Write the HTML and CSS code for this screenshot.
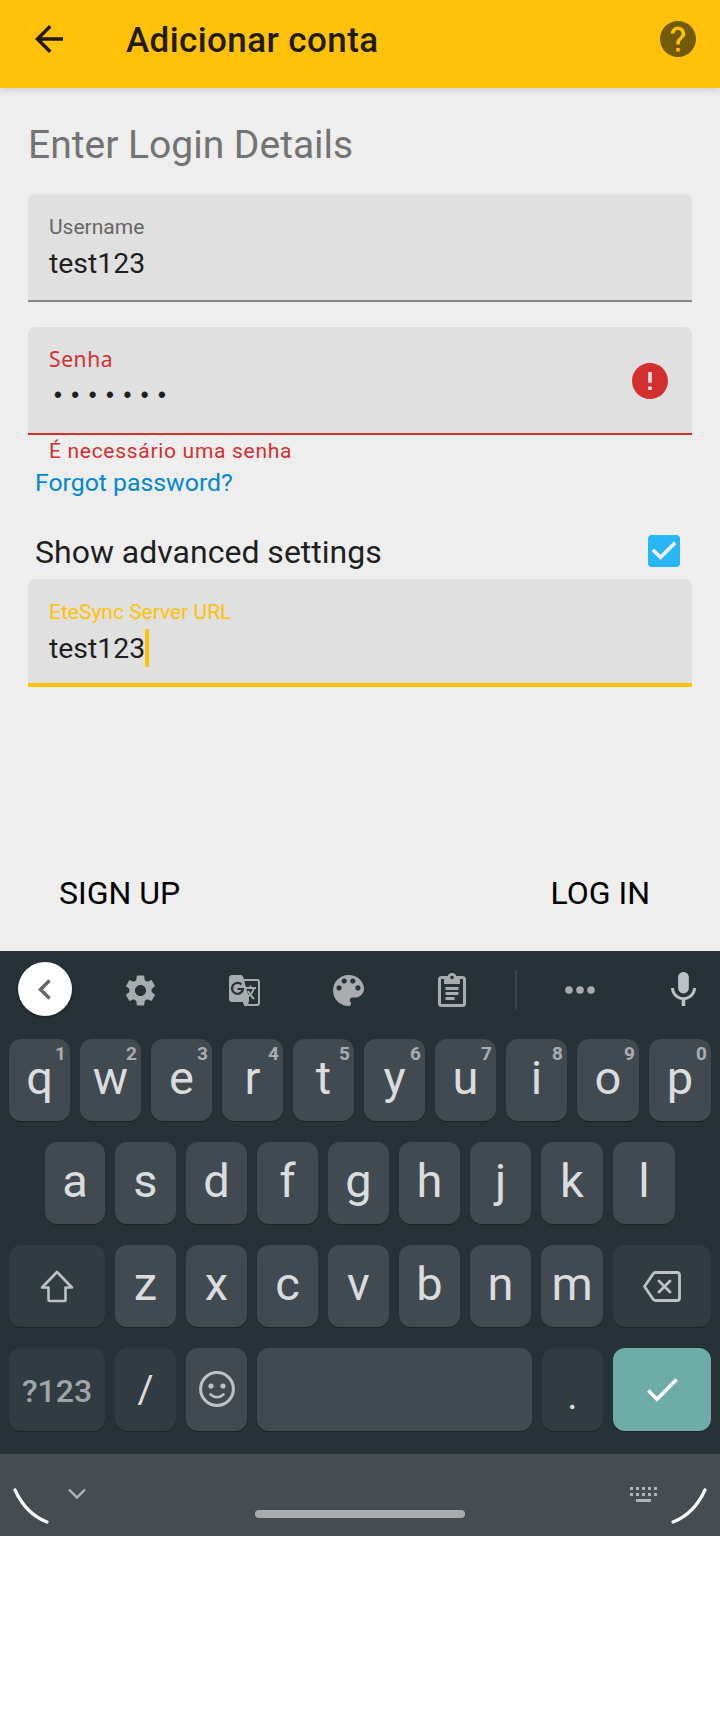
FILE: index.html
```html
<!DOCTYPE html>
<html lang="pt">
<head>
<meta charset="utf-8">
<title>Adicionar conta</title>
<link rel="stylesheet" href="styles.css">
</head>
<body>
<header class="appbar">
  <svg class="back" width="28" height="28" viewBox="4 4 16 16"><path fill="currentColor" d="M20 11H7.830l5.590-5.590L12 4l-8 8 8 8 1.410-1.410L7.830 13H20v-2z"/></svg>
  <h1 class="appbar-title">Adicionar conta</h1>
  <svg class="help" width="36" height="36" viewBox="2 2 20 20"><path fill="currentColor" d="M12 2C6.480 2 2 6.480 2 12s4.480 10 10 10 10-4.480 10-10S17.520 2 12 2zm1 17h-2v-2h2v2zm2.070-7.750l-.9.920C13.450 12.900 13 13.500 13 15h-2v-.5c0-1.100.45-2.100 1.170-2.830l1.240-1.260c.37-.36.59-.86.59-1.410 0-1.100-.9-2-2-2s-2 .9-2 2H8c0-2.210 1.790-4 4-4s4 1.790 4 4c0 .88-.36 1.680-.93 2.250z"/></svg>
</header>
<main class="form">
  <h2 class="heading">Enter Login Details</h2>
  <div class="field">
    <div class="label">Username</div>
    <div class="value">test123</div>
  </div>
  <div class="field field-error">
    <div class="field-text">
      <div class="label label-noto">Senha</div>
      <div class="value dots">•••••••</div>
    </div>
    <svg class="error-icon" width="36" height="36" viewBox="2 2 20 20"><path fill="currentColor" d="M12 2C6.480 2 2 6.480 2 12s4.480 10 10 10 10-4.480 10-10S17.520 2 12 2zm1 15h-2v-2h2v2zm0-4h-2V7h2v6z"/></svg>
  </div>
  <div class="error">É necessário uma senha</div>
  <a class="forgot">Forgot password?</a>
  <div class="advanced">
    <span class="advanced-text">Show advanced settings</span>
    <svg class="checkbox" width="32" height="32" viewBox="3 3 18 18"><path fill="currentColor" d="M19 3H5c-1.110 0-2 .9-2 2v14c0 1.100.89 2 2 2h14c1.110 0 2-.9 2-2V5c0-1.100-.89-2-2-2zm-9 14l-5-5 1.410-1.410L10 14.170l7.590-7.590L19 8l-9 9z"/></svg>
  </div>
  <div class="field field-focus">
    <div class="label">EteSync Server URL</div>
    <div class="value">test123<span class="caret"></span></div>
  </div>
  <div class="actions">
    <span class="action">SIGN UP</span>
    <span class="action">LOG IN</span>
  </div>
</main>
<section class="keyboard">
  <div class="tools">
    <span class="collapse"><svg width="13" height="21" viewBox="0 0 13 21"><path fill="none" stroke="#666" stroke-width="3.400" d="M11.500 1.500L2.500 10.500l9 9"/></svg></span>
    <svg class="tool gear" width="31" height="31" viewBox="2 2 20 20"><path fill="currentColor" d="M19.140 12.940c.04-.3.060-.61.060-.94 0-.32-.02-.64-.07-.94l2.030-1.580c.18-.14.23-.41.120-.61l-1.920-3.320c-.12-.22-.37-.29-.59-.22l-2.390.96c-.5-.38-1.030-.7-1.620-.94l-.36-2.540c-.04-.24-.24-.41-.48-.41h-3.840c-.24 0-.43.17-.47.41l-.36 2.540c-.59.24-1.130.57-1.620.94l-2.390-.96c-.22-.08-.47 0-.59.22L2.740 8.870c-.12.21-.08.47.12.61l2.030 1.580c-.05.3-.09.63-.09.940s.02.64.07.94l-2.030 1.580c-.18.14-.23.41-.12.610l1.920 3.320c.12.22.37.29.59.22l2.390-.96c.5.38 1.030.7 1.620.94l.36 2.540c.05.24.24.41.48.41h3.840c.24 0 .44-.17.47-.41l.36-2.540c.59-.24 1.130-.56 1.620-.94l2.390.96c.22.08.47 0 .59-.22l1.920-3.320c.12-.22.07-.47-.12-.61l-2.010-1.580zM12 15.600c-1.980 0-3.600-1.620-3.600-3.600s1.620-3.600 3.600-3.600 3.600 1.620 3.600 3.600-1.620 3.600-3.600 3.600z"/></svg>
    <svg class="tool translate" width="31" height="31" viewBox="0 0 31 31">
      <path fill="none" stroke="currentColor" stroke-width="2" d="M13 5h15q2 0 2 2v21q0 2-2 2H16l-3-8"/>
      <path fill="currentColor" d="M3 0h9q1.500 0 2 1.500L20 19v8l-2 4-3.500-4H3q-3 0-3-3V3q0-3 3-3z"/>
      <path fill="#263238" d="M15.300 6.500H28v21h-8.500l1-3z"/>
      <path fill="none" stroke="#263238" stroke-width="2.200" d="M12.500 9.500A5.500 5.500 0 1 0 14 14H8.500"/>
      <path fill="none" stroke="currentColor" stroke-width="1.800" d="M16 13h11M21.500 10.500V13M25 13q-1.500 6-7 9M19 16q2 4 6 8"/>
    </svg>
    <svg class="tool palette" width="31" height="31" viewBox="3 3 18 18"><path fill="currentColor" d="M12 3c-4.970 0-9 4.030-9 9s4.030 9 9 9c.83 0 1.500-.67 1.500-1.500 0-.39-.15-.74-.39-1.010-.23-.26-.38-.61-.38-.99 0-.83.67-1.500 1.500-1.500H16c2.760 0 5-2.240 5-5 0-4.420-4.030-8-9-8zm-5.500 9c-.83 0-1.500-.67-1.500-1.500S5.670 9 6.500 9 8 9.670 8 10.500 7.330 12 6.500 12zm3-4C8.670 8 8 7.330 8 6.500S8.670 5 9.500 5s1.500.67 1.500 1.500S10.330 8 9.500 8zm5 0c-.83 0-1.500-.67-1.500-1.500S13.670 5 14.500 5s1.500.67 1.500 1.500S15.330 8 14.500 8zm3 4c-.83 0-1.500-.67-1.500-1.500S16.670 9 17.500 9s1.500.67 1.500 1.500-.67 1.500-1.500 1.500z"/></svg>
    <svg class="tool clip" width="28" height="34" viewBox="0 0 28 34">
      <rect x="1.500" y="4.500" width="25" height="28" rx="2" fill="none" stroke="currentColor" stroke-width="3"/>
      <path fill="currentColor" d="M6 4h16v7H6z"/><circle cx="14" cy="4.500" r="4.500" fill="currentColor"/><circle cx="14" cy="4.500" r="1.800" fill="#263238"/>
      <path stroke="currentColor" stroke-width="3" d="M7.500 15.500h13M7.500 20.500h13M7.500 25.500h9"/>
    </svg>
    <span class="divider"></span>
    <svg class="tool more" width="30" height="8" viewBox="0 0 30 8"><circle cx="4" cy="4" r="3.800" fill="currentColor"/><circle cx="15" cy="4" r="3.800" fill="currentColor"/><circle cx="26" cy="4" r="3.800" fill="currentColor"/></svg>
    <svg class="tool mic" width="25" height="34" viewBox="5 2 14 19"><path fill="currentColor" d="M12 14c1.660 0 2.990-1.340 2.990-3L15 5c0-1.660-1.340-3-3-3S9 3.340 9 5v6c0 1.660 1.340 3 3 3zm5.300-3c0 3-2.540 5.100-5.300 5.100S6.700 14 6.700 11H5c0 3.410 2.720 6.230 6 6.720V21h2v-3.280c3.280-.48 6-3.300 6-6.720h-1.700z"/></svg>
  </div>
  <div class="row">
    <div class="key">q<sup class="num">1</sup></div><div class="key">w<sup class="num">2</sup></div><div class="key">e<sup class="num">3</sup></div><div class="key">r<sup class="num">4</sup></div><div class="key">t<sup class="num">5</sup></div><div class="key">y<sup class="num">6</sup></div><div class="key">u<sup class="num">7</sup></div><div class="key">i<sup class="num">8</sup></div><div class="key wide">o<sup class="num">9</sup></div><div class="key wide">p<sup class="num">0</sup></div>
  </div>
  <div class="row row-home">
    <div class="key narrow">a</div><div class="key">s</div><div class="key">d</div><div class="key">f</div><div class="key">g</div><div class="key">h</div><div class="key">j</div><div class="key wide">k</div><div class="key wide">l</div>
  </div>
  <div class="row">
    <div class="key dark side"><svg class="shift" width="34" height="33" viewBox="0 0 34 33"><path fill="none" stroke="currentColor" stroke-width="2.600" stroke-linejoin="round" d="M17 2L2 17.500h6.500V30q0 1 1 1h15q1 0 1-1V17.500H32z"/></svg></div><div class="key">z</div><div class="key">x</div><div class="key">c</div><div class="key">v</div><div class="key">b</div><div class="key">n</div><div class="key wide">m</div><div class="key dark end"><svg class="del" width="38" height="31" viewBox="0 0 38 31"><path fill="none" stroke="currentColor" stroke-width="2.800" stroke-linejoin="round" stroke-linecap="round" d="M12.500 1.500H34q2.500 0 2.500 2.500v23q0 2.500-2.500 2.500H12.500q-1.500 0-2.500-1.500L1.500 15.500 10 3q1-1.500 2.500-1.500zM16 10l11 11M27 10l-11 11"/></svg></div>
  </div>
  <div class="row row-last">
    <div class="key dark side sym">?123</div><div class="key dark punct">/</div><div class="key"><svg class="smile" width="36" height="36" viewBox="0 0 36 36"><circle cx="18" cy="18" r="16.400" fill="none" stroke="currentColor" stroke-width="3"/><circle cx="12" cy="15" r="2.600" fill="currentColor"/><circle cx="24" cy="15" r="2.600" fill="currentColor"/><path fill="none" stroke="currentColor" stroke-width="2.600" stroke-linecap="round" d="M11.500 23.500q6.500 5.500 13 0"/></svg></div><div class="key space"></div><div class="key dark punct dot">.</div><div class="key go end"><svg class="ok" width="31" height="24" viewBox="0 0 31 24"><path fill="none" stroke="#fff" stroke-width="3.600" d="M1.300 12.500l8.700 8.700L29.500 1.500"/></svg></div>
  </div>
</section>
<footer class="navbar">
  <svg class="arc" width="36" height="36" viewBox="0 0 36 36"><path fill="none" stroke="#fff" stroke-width="3.200" stroke-linecap="round" d="M2 2Q13 26 34 34"/></svg>
  <svg class="chevron" width="18" height="12" viewBox="0 0 18 12"><path fill="none" stroke="#b0b4b6" stroke-width="2.400" d="M1 1.500l8 8 8-8"/></svg>
  <span class="pill"></span>
  <svg class="kbd" width="27" height="15" viewBox="0 0 27 15"><path stroke="#b0b4b6" stroke-width="3" stroke-dasharray="3 3" d="M0 1.500h27M0 7.500h27"/><path stroke="#b0b4b6" stroke-width="3" d="M6 13.500h15"/></svg>
  <svg class="arc arc-right" width="36" height="36" viewBox="0 0 36 36"><path fill="none" stroke="#fff" stroke-width="3.200" stroke-linecap="round" d="M34 2Q23 26 2 34"/></svg>
</footer>
</body>
</html>
```

FILE: styles.css
```css
* { box-sizing: border-box; }
body { margin: 0; background: #fff; font-family: Roboto, "Noto Sans", sans-serif; }
svg { display: block; flex: none; }
h1, h2 { margin: 0; font-weight: 400; }

.appbar { position: relative; z-index: 1; display: flex; height: 88px; padding: 0 24px 0 35px; background: #ffc10a; box-shadow: 0 1px 8px rgba(0, 0, 0, .17); color: #211b04; }
.back { margin-top: 25px; }
.appbar-title { flex: 1; margin-left: 63px; font-size: 35px; line-height: 40px; padding-top: 21px; font-weight: 500; letter-spacing: .4px; }
.help { margin-top: 21px; color: #735a06; }

.form { height: 863px; padding: 32px 28px 0; background: #eee; color: #1f1f1f; }
.heading { height: 74px; font-size: 39px; line-height: 50px; color: #737373; }
.field { height: 108px; margin-bottom: 25px; padding: 20px 21px 0; border-radius: 7px 7px 0 0; border-bottom: 2px solid #858585; background: #e0e0e0; }
.label { font-size: 21px; line-height: 26px; color: #666; }
.label-noto { font-family: "Noto Sans", sans-serif; line-height: 24px; height: 26px; letter-spacing: .6px; }
.value { display: flex; height: 38px; font-size: 28.400px; line-height: 38px; margin-top: 5px; }
.field-error { display: flex; justify-content: space-between; margin-bottom: 0; border-color: #d32f2f; }
.field-error .label, .error, .error-icon { color: #d32f2f; }
.error-icon { margin: 16px 3px 0 0; }
.dots { font-family: "Liberation Mono", monospace; font-size: 23px; letter-spacing: 3.550px; padding-left: 2px; }
.error { padding-left: 21px; height: 30px; font-size: 21px; line-height: 32px; letter-spacing: .7px; }
.forgot { display: block; height: 36px; margin-left: 7px; font-size: 24.800px; line-height: 36px; color: #0288d1; }
.advanced { display: flex; justify-content: space-between; height: 78px; padding: 34px 12px 0 7px; }
.advanced-text { font-size: 32px; line-height: 34px; }
.checkbox { color: #29b6f6; }
.field-focus { margin-bottom: 0; border-bottom: 4px solid #ffc10a; }
.field-focus .label { color: #ffc10a; }
.caret { width: 4px; height: 38px; margin-top: -1px; background: #ffc10a; }
.actions { display: flex; justify-content: space-between; padding: 186px 42px 0 31px; color: #000; font-size: 32px; line-height: 40px; }

.keyboard { height: 503px; background: #263238; }
.tools { display: flex; height: 88px; color: #a8acaf; }
.tool { color: #a8acaf; }
.collapse { display: flex; align-items: center; justify-content: center; width: 54px; height: 54px; margin: 11px 0 0 18px; padding-right: 2px; border-radius: 50%; background: #fff; box-shadow: 0 1px 3px rgba(0, 0, 0, .4); }
.gear { margin: 24px 0 0 53px; }
.translate { margin: 24px 0 0 73px; }
.palette { margin: 24px 0 0 73px; }
.clip { margin: 22px 0 0 74px; }
.divider { width: 2px; height: 39px; margin: 19px 0 0 49px; background: #3a454b; }
.more { margin: 35px 0 0 48px; }
.mic { margin: 21px 0 0 76px; color: #bdc1c3; }

.row { display: flex; gap: 10px; height: 82px; margin: 0 9px 21px; }
.row-home { margin-left: 45px; }
.row-last { height: 83px; margin-bottom: 0; }
.key { position: relative; display: flex; align-items: center; justify-content: center; width: 61px; flex: none; border-radius: 12px; background: #424a51; box-shadow: 0 1px 0 #1b2429; color: #dadcde; font-size: 47px; line-height: 60px; padding-bottom: 5px; }
.num { position: absolute; top: 3px; right: 4px; font-size: 19px; line-height: 24px; font-weight: 700; color: #a9adb0; }
.narrow { width: 60px; }
.wide { width: 62px; }
.side { width: 96px; }
.end { width: 98px; }
.dark { background: #313b42; }
.space { width: 275px; }
.sym { font-size: 32px; font-weight: 500; padding: 3px 0 0; color: #a0a5a8; }
.punct { font-size: 39px; padding: 1px 0 0; }
.dot { padding-top: 12px; }
.go { background: #6eaca7; }
.shift, .del, .smile { color: #bec2c4; }
.shift, .ok { margin-top: 5px; }
.del { margin-top: 6px; }
.smile { margin-top: 4px; }

.navbar { display: flex; height: 82px; background: #454d52; }
.arc { margin: 34px 0 0 13px; }
.chevron { margin: 34px 0 0 19px; }
.pill { width: 210px; height: 8px; margin: 56px 0 0 169px; border-radius: 4px; background: #a9acae; }
.kbd { margin: 33px 0 0 165px; }
.arc-right { margin-left: 14px; }
```
